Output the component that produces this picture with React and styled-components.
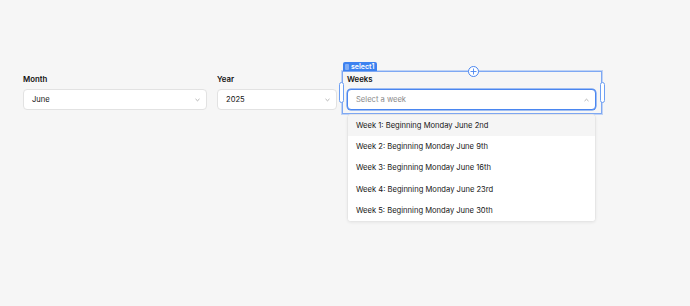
import React from "react";
import styled, { createGlobalStyle } from "styled-components";

const Global = createGlobalStyle`
  html, body {
    margin: 0;
    padding: 0;
    background: #f6f6f6;
    font-family: Inter, "Liberation Sans", sans-serif;
  }
`;

const Page = styled.div`
  width: 690px;
  height: 306px;
  box-sizing: border-box;
  padding: 71px 0 0 23px;
  display: flex;
  align-items: flex-start;
`;

const Field = styled.div`
  width: ${(p) => p.width}px;
  margin-right: ${(p) => p.gap || 0}px;
  padding-top: 1px;
  display: flex;
  flex-direction: column;
`;

const Label = styled.div`
  font-size: 7.8px;
  font-weight: 600;
  color: #111;
  height: 12px;
  line-height: 12px;
  margin-top: 1px;
  margin-bottom: 4px;
`;

const Box = styled.div`
  height: 21px;
  box-sizing: border-box;
  background: #fff;
  border: 1px solid ${(p) => (p.focus ? "#4a86f0" : "#e2e2e2")};
  box-shadow: ${(p) => (p.focus ? "0 0 0 0.5px #4a86f0" : "none")};
  border-radius: 4px;
  display: flex;
  align-items: center;
  justify-content: space-between;
  padding: 0 6px 0 8px;
  font-size: 7.6px;
  color: ${(p) => (p.placeholder ? "#8a8a8a" : "#161616")};
`;

const Chevron = ({ up }) => (
  <svg width="5" height="4" viewBox="0 0 5 4" fill="none">
    <path
      d={up ? "M0.8 2.8 L2.5 1.2 L4.2 2.8" : "M0.8 1.2 L2.5 2.8 L4.2 1.2"}
      stroke="#a0a0a0"
      strokeWidth="0.8"
      strokeLinecap="round"
      strokeLinejoin="round"
    />
  </svg>
);

const Frame = styled.div`
  position: relative;
  width: 260px;
  box-sizing: border-box;
  border: 1px solid #7ea8f3;
  box-shadow: 0 0 0 1px rgba(126, 168, 243, 0.45);
  padding: 0 5px 3px 4px;
`;

const Tag = styled.div`
  position: absolute;
  left: 0;
  top: -10px;
  height: 9px;
  padding: 0 3px 0 2px;
  background: #3d82f0;
  border-radius: 2px 2px 0 0;
  color: #fff;
  font-size: 7px;
  font-weight: 600;
  line-height: 9px;
  display: flex;
  align-items: center;
  gap: 2px;
`;

const Grip = styled.span`
  width: 4px;
  height: 6px;
  background: rgba(255, 255, 255, 0.35);
  border-radius: 1px;
`;

const Plus = styled.div`
  position: absolute;
  left: 125px;
  top: -6px;
  width: 9px;
  height: 9px;
  border-radius: 50%;
  background: #fff;
  border: 1px solid #4a86f0;
  display: flex;
  align-items: center;
  justify-content: center;
`;

const Handle = styled.div`
  position: absolute;
  top: 10px;
  ${(p) => (p.side === "left" ? "left: -4px;" : "right: -4px;")}
  width: 3px;
  height: 19px;
  background: #fff;
  border: 1px solid #6d9ff3;
  border-radius: 3px;
`;

const Menu = styled.div`
  position: absolute;
  left: 4px;
  top: 42px;
  width: 249px;
  box-sizing: border-box;
  background: #fff;
  border: 1px solid #e6e6e6;
  border-radius: 4px;
  box-shadow: 0 1px 3px rgba(0, 0, 0, 0.06);
  overflow: hidden;
`;

const Item = styled.div`
  height: 21.2px;
  line-height: 21px;
  padding-left: 8px;
  font-size: 7.6px;
  color: #161616;
  background: ${(p) => (p.active ? "#f5f5f5" : "#fff")};
`;

const weeks = [
  "Week 1: Beginning Monday June 2nd",
  "Week 2: Beginning Monday June 9th",
  "Week 3: Beginning Monday June 16th",
  "Week 4: Beginning Monday June 23rd",
  "Week 5: Beginning Monday June 30th",
];

export default function App() {
  return (
    <>
      <Global />
      <Page>
        <Field width={184} gap={10}>
          <Label>Month</Label>
          <Box>
            June
            <Chevron />
          </Box>
        </Field>
        <Field width={120} gap={5}>
          <Label>Year</Label>
          <Box>
            2025
            <Chevron />
          </Box>
        </Field>
        <Frame>
          <Tag>
            <Grip />
            select1
          </Tag>
          <Plus>
            <svg width="7" height="7" viewBox="0 0 7 7">
              <path d="M3.5 0.5 V6.5 M0.5 3.5 H6.5" stroke="#4a86f0" strokeWidth="0.9" />
            </svg>
          </Plus>
          <Handle side="left" />
          <Handle side="right" />
          <Label>Weeks</Label>
          <Box focus placeholder>
            Select a week
            <Chevron up />
          </Box>
          <Menu>
            {weeks.map((w, i) => (
              <Item key={w} active={i === 0}>
                {w}
              </Item>
            ))}
          </Menu>
        </Frame>
      </Page>
    </>
  );
}
